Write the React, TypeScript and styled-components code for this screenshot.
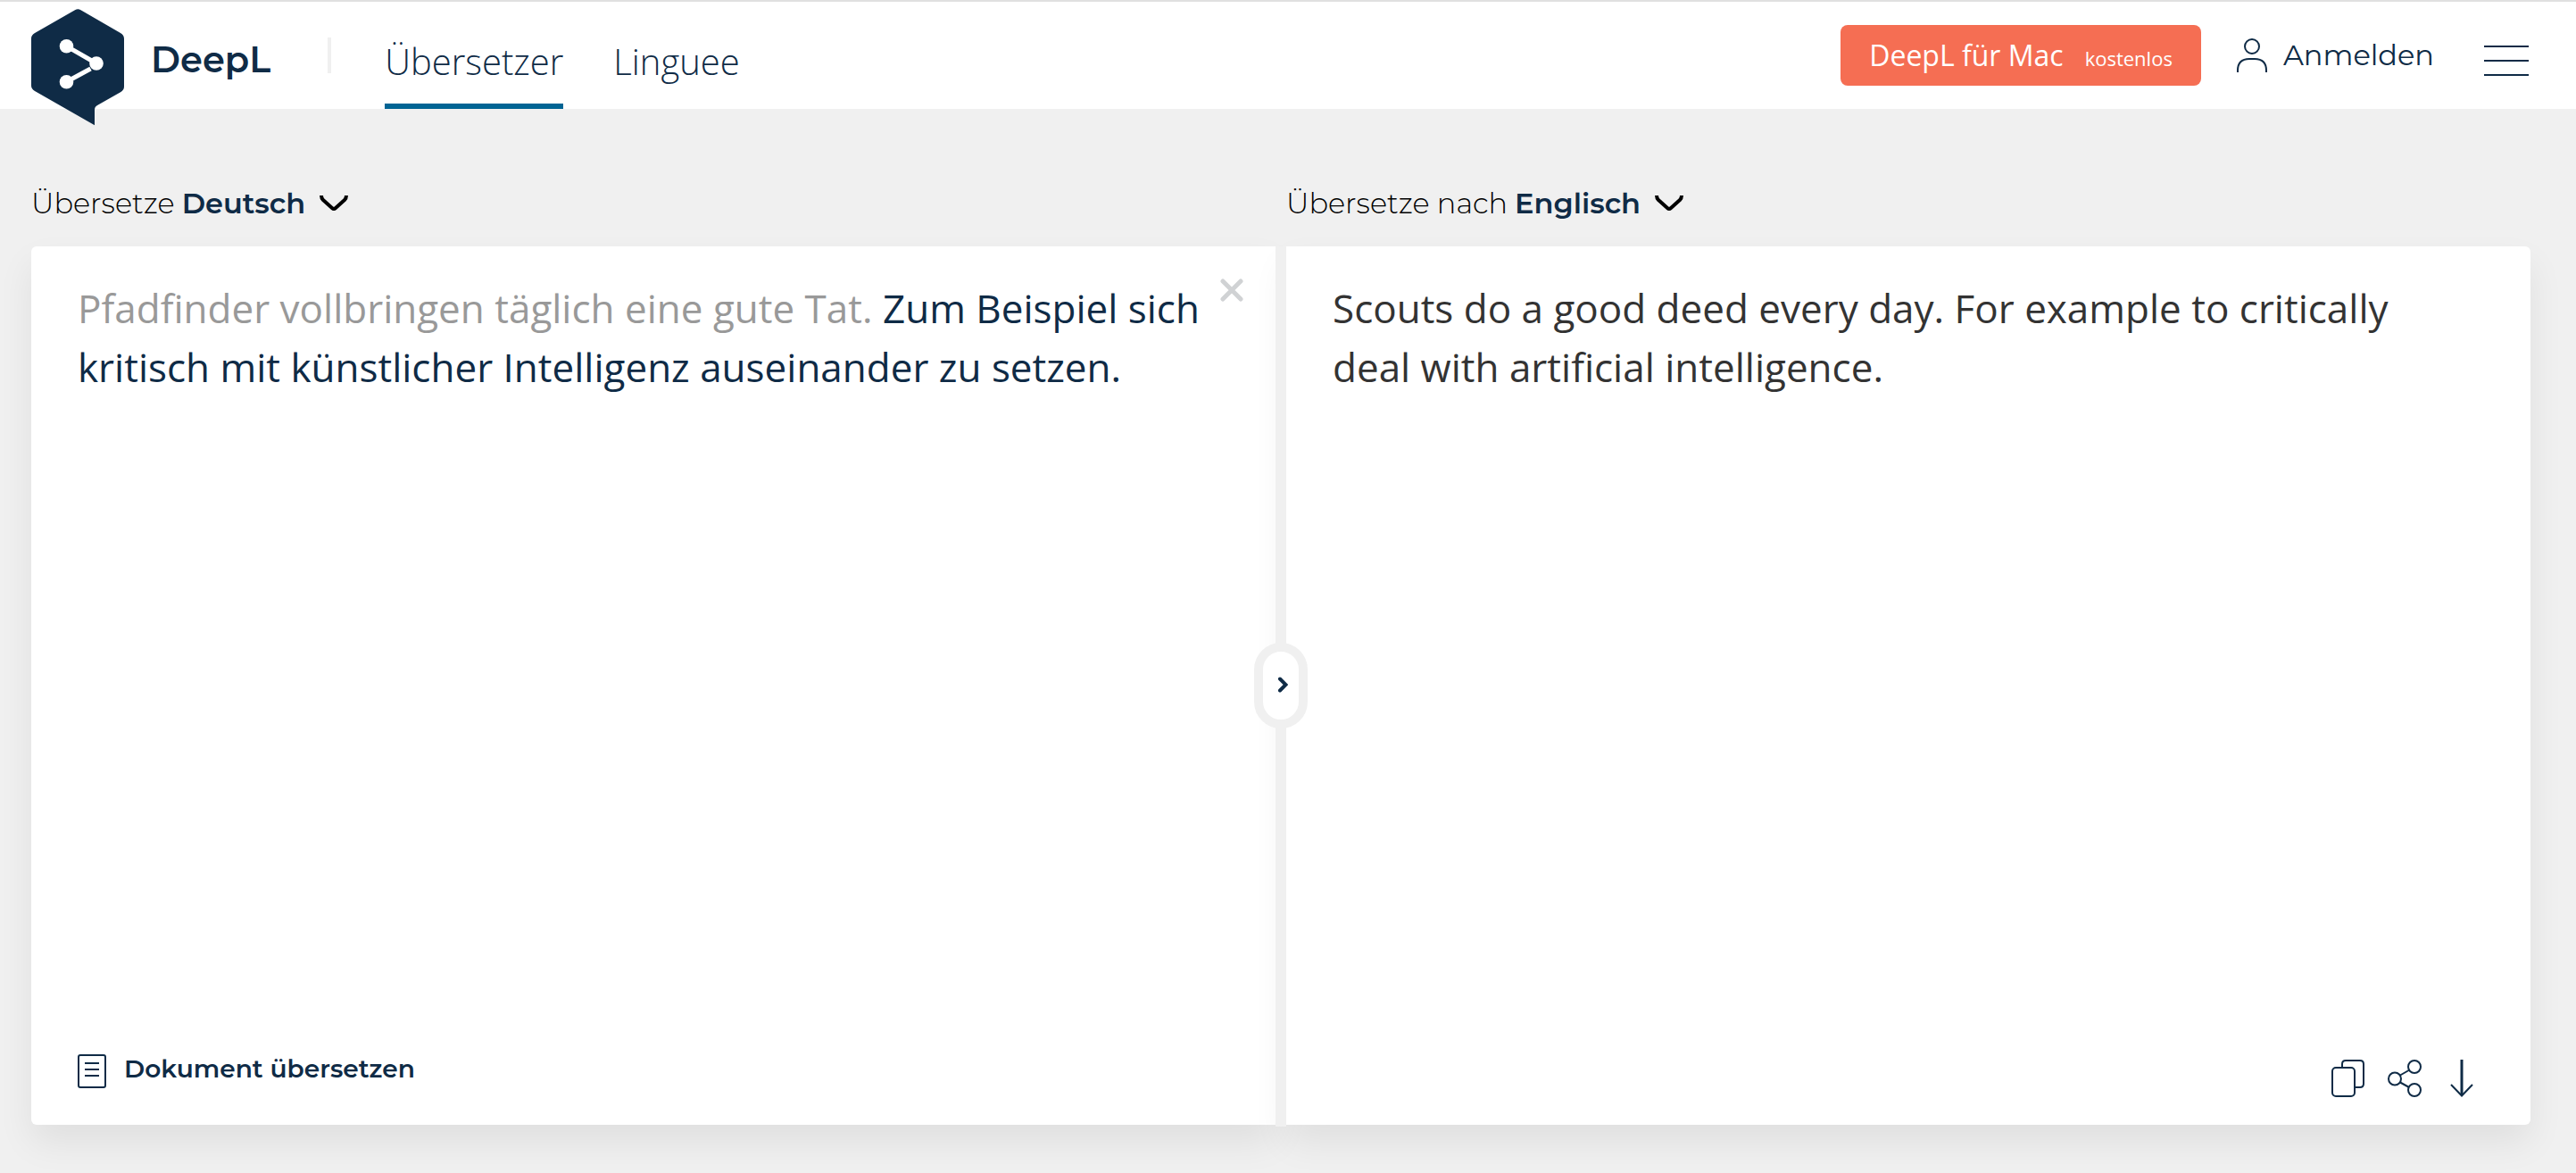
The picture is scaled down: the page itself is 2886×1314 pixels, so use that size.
import React, { useState } from "react";
import styled, { createGlobalStyle } from "styled-components";

const navy = "#0f2b46";
const grey = "#f0f0f0";
const heading = `"Montserrat", "Inter", sans-serif`;
const body = `"Open Sans", "Noto Sans", sans-serif`;

const GlobalStyle = createGlobalStyle`
  *, *::before, *::after { box-sizing: border-box; }
  body { margin: 0; background: ${grey}; font-family: ${body}; color: ${navy}; }
  button, select, textarea { font: inherit; color: inherit; border: 0; padding: 0; margin: 0; background: none; }
  a { color: inherit; text-decoration: none; }
  svg { display: block; flex: none; }
`;

const Page = styled.div`
  min-height: 100vh;
  display: flex;
  flex-direction: column;
`;

const Header = styled.header`
  height: 122px;
  border-top: 2px solid #e0e0e0;
  background: #fff;
  padding: 0 53px 0 35px;
  display: flex;
  align-items: center;
  justify-content: space-between;
`;

const HeaderGroup = styled.div`
  display: flex;
  align-items: center;
  height: 120px;
`;

const Brand = styled.a`
  display: flex;
  align-items: flex-start;
  height: 120px;
  padding-top: 8px;
  gap: 30px;
`;

const Wordmark = styled.span`
  font: 600 40px/114px ${heading};
`;

const Divider = styled.span`
  width: 4px;
  height: 40px;
  margin: 0 60px 0 64px;
  background: ${grey};
`;

const Nav = styled.nav`
  display: flex;
  gap: 56px;
`;

const NavLink = styled.a<{ $active?: boolean }>`
  display: flex;
  align-items: center;
  height: 120px;
  padding-top: 18px;
  border-bottom: 6px solid ${(p) => (p.$active ? "#006494" : "transparent")};
  font-size: 40px;
  font-weight: 300;
`;

const DownloadButton = styled.button`
  height: 68px;
  padding: 0 32px;
  border-radius: 8px;
  background: #f56e53;
  color: #fff;
  font-size: 32px;
  display: flex;
  align-items: baseline;
  gap: 24px;
  line-height: 68px;
  cursor: pointer;
`;

const Free = styled.span`
  font-size: 22px;
`;

const LoginLink = styled.a`
  display: flex;
  align-items: center;
  gap: 18px;
  margin-left: 40px;
  font: 400 32px/40px ${heading};
`;

const MenuButton = styled.button`
  display: flex;
  flex-direction: column;
  gap: 14px;
  margin: 12px 0 0 56px;
  cursor: pointer;
`;

const MenuBar = styled.span`
  width: 50px;
  height: 2px;
  background: ${navy};
`;

const Translator = styled.main`
  flex: 1;
  display: grid;
  grid-template-columns: minmax(0, 1fr) minmax(0, 1fr);
  grid-template-rows: auto 1fr;
  column-gap: 12px;
  padding: 84px 51px 54px 35px;
`;

const LanguageBar = styled.div`
  display: flex;
  align-items: center;
  gap: 8px;
  height: 44px;
  margin-bottom: 26px;
  font: 300 32px/44px ${heading};
  color: #000;
`;

const LanguageSelect = styled.select`
  appearance: none;
  field-sizing: content;
  padding-right: 8px;
  font-weight: 600;
  color: ${navy};
  cursor: pointer;
`;

const Panels = styled.div`
  grid-column: 1 / -1;
  position: relative;
  display: grid;
  grid-template-columns: minmax(0, 1fr) minmax(0, 1fr);
  background: ${grey};
  column-gap: 12px;
`;

const Panel = styled.section<{ $side: "left" | "right" }>`
  display: flex;
  flex-direction: column;
  justify-content: space-between;
  padding: 36px 36px 30px 52px;
  background: #fff;
  border-radius: ${(p) => (p.$side === "left" ? "6px 0 0 6px" : "0 6px 6px 0")};
  box-shadow: 0 20px 40px rgba(0, 0, 0, 0.07);
`;

const TextRow = styled.div`
  flex: 1;
  display: flex;
  align-items: flex-start;
  gap: 16px;
`;

const SourceText = styled.div`
  flex: 1;
  font-size: 44px;
  line-height: 66px;
  outline: none;
`;

const Muted = styled.span`
  color: #999;
`;

const TargetText = styled.textarea`
  flex: 1;
  align-self: stretch;
  padding-right: 42px;
  font-size: 44px;
  line-height: 66px;
  color: #333;
  resize: none;
  outline: none;
`;

const IconButton = styled.button`
  display: flex;
  cursor: pointer;
`;

const SwapButton = styled.button`
  position: absolute;
  top: 50%;
  left: 50%;
  transform: translate(-50%, -50%);
  width: 60px;
  height: 96px;
  display: flex;
  align-items: center;
  justify-content: center;
  border: 10px solid ${grey};
  border-radius: 30px;
  background: #fff;
  cursor: pointer;
`;

const Seam = styled.span`
  position: absolute;
  top: 0;
  bottom: -2px;
  left: 50%;
  width: 12px;
  margin-left: -6px;
  background: ${grey};
`;

const PanelFooter = styled.div<{ $end?: boolean }>`
  display: flex;
  align-items: center;
  justify-content: ${(p) => (p.$end ? "flex-end" : "flex-start")};
  gap: 26px;
  padding-right: 22px;
  height: 44px;
`;

const DocumentButton = styled.button`
  display: flex;
  align-items: flex-start;
  gap: 20px;
  height: 54px;
  font: 600 28px/32px ${heading};
  cursor: pointer;
`;

const Logo = () => (
  <svg width="104" height="131" viewBox="0 0 104 131" aria-hidden="true">
    <path
      fill={navy}
      d="M49 1.2Q52.3-.6 55.5 1.2L100 27Q104 29.4 104 33.5V87Q104 91 100 93.3L74 108Q71 109.6 71 113V130.3L4 92Q0 89.6 0 86V33Q0 29.3 4 27Z"
    />
    <path d="M39.3 41.700L73 61M39.300 81.700L66.500 67" stroke="#fff" strokeWidth="5" />
    <circle cx="39.5" cy="41.7" r="7.8" fill="#fff" />
    <circle cx="73" cy="61" r="7.8" fill="#fff" />
    <circle cx="39.5" cy="81.7" r="7.8" fill="#fff" />
  </svg>
);

const UserIcon = () => (
  <svg width="34" height="38" viewBox="0 0 34 38" fill="none" stroke={navy} strokeWidth="2" aria-hidden="true">
    <circle cx="17" cy="9" r="8" />
    <path d="M1 38V36Q1 23 14 23H20Q33 23 33 36V38" />
  </svg>
);

const ChevronDown = () => (
  <svg width="32" height="20" viewBox="0 0 32 20" fill="none" stroke="#000" strokeWidth="4" strokeLinejoin="round" aria-hidden="true">
    <path d="M2 1Q2 4 4 6L14 15Q16 17 18 15L28 6Q30 4 30 1" />
  </svg>
);

const CloseIcon = () => (
  <svg width="26" height="26" viewBox="0 0 26 26" stroke="#d0d2d4" strokeWidth="5" strokeLinecap="round" aria-hidden="true">
    <path d="M3 3L23 23M23 3L3 23" />
  </svg>
);

const ArrowRight = () => (
  <svg width="16" height="20" viewBox="-4 0 16 20" fill="none" stroke={navy} strokeWidth="4" strokeLinecap="round" aria-hidden="true">
    <path d="M3 2.500L9.500 9L3 15.500" />
  </svg>
);

const DocumentIcon = () => (
  <svg width="32" height="38" viewBox="0 0 32 38" fill="none" stroke={navy} strokeWidth="2" aria-hidden="true">
    <rect x="1" y="1" width="30" height="36" rx="2" />
    <path d="M8 10H24M8 17H24M8 24H24" />
  </svg>
);

const CopyIcon = () => (
  <svg width="37" height="42" viewBox="0 0 37 42" fill="none" stroke={navy} strokeWidth="2" aria-hidden="true">
    <rect x="1" y="9" width="25" height="32" rx="4" />
    <path d="M12 9V5Q12 1 16 1H32Q36 1 36 5V27Q36 31 32 31H26" />
  </svg>
);

const ShareIcon = () => (
  <svg width="38" height="42" viewBox="0 0 38 42" fill="none" stroke={navy} strokeWidth="2" aria-hidden="true">
    <circle cx="8" cy="21.500" r="7" />
    <circle cx="30" cy="8" r="7" />
    <circle cx="30" cy="34" r="7" />
    <path d="M14 17.500L24.500 11.500M14 25.500L24 31" />
  </svg>
);

const DownIcon = () => (
  <svg width="38" height="42" viewBox="-6 0 38 42" fill="none" stroke={navy} strokeWidth="2" aria-hidden="true">
    <path d="M13 0V40" strokeWidth="3" />
    <path d="M1 28L13 40.500L25 28" />
  </svg>
);

export default function App() {
  const [target, setTarget] = useState(
    "Scouts do a good deed every day. For example to critically deal with artificial intelligence."
  );

  return (
    <Page>
      <GlobalStyle />
      <Header>
        <HeaderGroup>
          <Brand href="#">
            <Logo />
            <Wordmark>DeepL</Wordmark>
          </Brand>
          <Divider />
          <Nav>
            <NavLink href="#translator" $active>Übersetzer</NavLink>
            <NavLink href="#linguee">Linguee</NavLink>
          </Nav>
        </HeaderGroup>
        <HeaderGroup>
          <DownloadButton type="button">
            DeepL für Mac <Free>kostenlos</Free>
          </DownloadButton>
          <LoginLink href="#login">
            <UserIcon />
            Anmelden
          </LoginLink>
          <MenuButton type="button" aria-label="Menü">
            <MenuBar />
            <MenuBar />
            <MenuBar />
          </MenuButton>
        </HeaderGroup>
      </Header>
      <Translator>
        <LanguageBar>
          <label htmlFor="source-language">Übersetze</label>
          <LanguageSelect id="source-language">
            <option>Deutsch</option>
          </LanguageSelect>
          <ChevronDown />
        </LanguageBar>
        <LanguageBar>
          <label htmlFor="target-language">Übersetze nach</label>
          <LanguageSelect id="target-language">
            <option>Englisch</option>
          </LanguageSelect>
          <ChevronDown />
        </LanguageBar>
        <Panels>
          <Panel $side="left">
            <TextRow>
              <SourceText role="textbox" aria-multiline="true" aria-label="Ausgangstext" contentEditable suppressContentEditableWarning spellCheck={false}>
                <Muted>Pfadfinder vollbringen täglich eine gute Tat.</Muted> Zum Beispiel sich kritisch mit künstlicher Intelligenz auseinander zu setzen.
              </SourceText>
              <IconButton type="button" aria-label="Text löschen">
                <CloseIcon />
              </IconButton>
            </TextRow>
            <PanelFooter>
              <DocumentButton type="button">
                <DocumentIcon />
                Dokument übersetzen
              </DocumentButton>
            </PanelFooter>
          </Panel>
          <Panel $side="right">
            <TextRow>
              <TargetText aria-label="Übersetzung" spellCheck={false} value={target} onChange={(e) => setTarget(e.target.value)} />
            </TextRow>
            <PanelFooter $end>
              <IconButton type="button" aria-label="Kopieren"><CopyIcon /></IconButton>
              <IconButton type="button" aria-label="Teilen"><ShareIcon /></IconButton>
              <IconButton type="button" aria-label="Herunterladen"><DownIcon /></IconButton>
            </PanelFooter>
          </Panel>
          <Seam />
          <SwapButton type="button" aria-label="Sprachen tauschen">
            <ArrowRight />
          </SwapButton>
        </Panels>
      </Translator>
    </Page>
  );
}
